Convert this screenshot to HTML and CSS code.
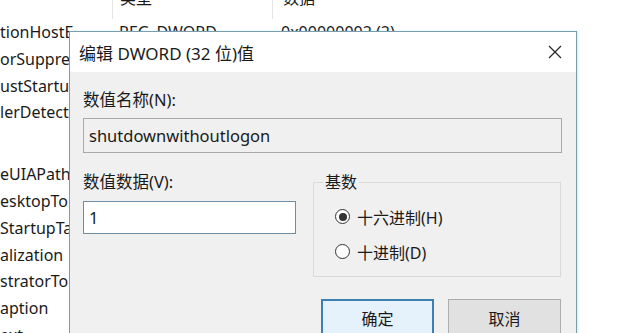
FILE: index.html
```html
<!DOCTYPE html>
<html lang="zh-CN">
<head>
    <meta charset="UTF-8">
    <meta name="viewport" content="width=device-width, initial-scale=1.0">
    <title>编辑 DWORD (32 位)值</title>
    <link rel="stylesheet" href="styles.css">
</head>
<body>
    <div class="regedit">
        <div class="reg-head">
            <div class="col name"></div>
            <div class="col type">类型</div>
            <div class="col data">数据</div>
        </div>
        <div class="reg-row">
            <div class="col name">tionHostE</div>
            <div class="col type">REG_DWORD</div>
            <div class="col data">0x00000002 (2)</div>
        </div>
        <div class="reg-row"><div class="col name">orSuppres</div></div>
        <div class="reg-row"><div class="col name">ustStartu</div></div>
        <div class="reg-row"><div class="col name">lerDetect</div></div>
        <div class="reg-row blank"><div class="col name"></div></div>
        <div class="reg-row"><div class="col name">eUIAPath</div></div>
        <div class="reg-row"><div class="col name">esktopTo</div></div>
        <div class="reg-row"><div class="col name">StartupTa</div></div>
        <div class="reg-row"><div class="col name">alization</div></div>
        <div class="reg-row"><div class="col name">stratorTo</div></div>
        <div class="reg-row"><div class="col name">aption</div></div>
        <div class="reg-row"><div class="col name">ext</div></div>
    </div>

    <div class="dialog">
        <div class="dialog-title">
            <span>编辑 DWORD (32 位)值</span>
            <svg class="close" width="14" height="14" viewBox="0 0 14 14">
                <path d="M1 1 L13 13 M13 1 L1 13" stroke="#2b2b2b" stroke-width="1.3" fill="none"/>
            </svg>
        </div>
        <div class="dialog-body">
            <label class="field-label">数值名称(N):</label>
            <input class="field name-field" type="text" value="shutdownwithoutlogon" readonly>

            <div class="lower">
                <div class="value-col">
                    <label class="field-label">数值数据(V):</label>
                    <input class="field value-field" type="text" value="1">
                </div>
                <fieldset class="base-group">
                    <legend>基数</legend>
                    <div class="radio-row">
                        <span class="radio checked"></span>
                        <span>十六进制(H)</span>
                    </div>
                    <div class="radio-row">
                        <span class="radio"></span>
                        <span>十进制(D)</span>
                    </div>
                </fieldset>
            </div>

            <div class="buttons">
                <button class="btn primary">确定</button>
                <button class="btn">取消</button>
            </div>
        </div>
    </div>
</body>
</html>
```

FILE: styles.css
```css
body {
    margin: 0;
    width: 620px;
    height: 333px;
    overflow: hidden;
    background-color: #fff;
    font-family: "Noto Sans", "Noto Sans CJK SC", sans-serif;
    color: #1a1a1a;
}

/* registry editor list behind the dialog */
.regedit {
    font-size: 16px;
}

.reg-head,
.reg-row {
    display: flex;
}

.reg-head {
    height: 19px;
    line-height: 16px;
    overflow: hidden;
}

.reg-head .col {
    margin-top: -10px;
    height: 30px;
}

.reg-head .type,
.reg-head .data {
    border-left: 1px solid #e4e4e4;
}

.reg-row {
    height: 26.8px;
    line-height: 26.8px;
}

.reg-row.blank {
    height: 35px;
}

.col {
    white-space: nowrap;
    overflow: hidden;
}

.col.name {
    width: 112px;
    padding-left: 0;
}

.col.type {
    width: 152px;
    padding-left: 7px;
}

.col.data {
    padding-left: 10px;
}

/* dialog window */
.dialog {
    position: absolute;
    left: 69px;
    top: 31px;
    width: 506px;
    height: 330px;
    border: 1px solid #7b9db0;
    background-color: #f0f0f0;
    box-shadow: 1px 0 2px rgba(120, 190, 210, 0.35);
}

.dialog-title {
    height: 40px;
    background-color: #fff;
    display: flex;
    align-items: center;
    justify-content: space-between;
    padding: 0 14px 0 9px;
    font-size: 17px;
    color: #1a1a1a;
}

.dialog-body {
    padding: 17px 14px 0 13px;
    font-size: 16.5px;
}

.field-label {
    display: block;
    line-height: 22px;
}

.field {
    display: block;
    box-sizing: border-box;
    font-family: "Noto Sans", "Noto Sans CJK SC", sans-serif;
    font-size: 16.5px;
    color: #1a1a1a;
    padding: 0 5px;
    outline: none;
}

.name-field {
    width: 479px;
    height: 35px;
    margin-top: 7px;
    border: 1px solid #a9a9a9;
    background-color: #f0f0f0;
}

.lower {
    display: grid;
    grid-template-columns: 213px 248px;
    column-gap: 17px;
    margin-top: 18px;
}

.value-field {
    width: 213px;
    height: 33px;
    margin-top: 8px;
    border: 1px solid #6d8ea3;
    background-color: #fff;
}

.base-group {
    margin: 0;
    padding: 6px 0 0 21px;
    height: 106px;
    box-sizing: border-box;
    border: 1px solid #dadada;
}

.base-group legend {
    padding: 0 2px;
    margin-left: -12px;
    line-height: 22px;
    font-size: 16px;
}

.radio-row {
    display: flex;
    align-items: center;
    gap: 7px;
    height: 35px;
    font-size: 16px;
}

.radio {
    width: 13px;
    height: 13px;
    border: 1px solid #333;
    border-radius: 50%;
    background-color: #fff;
    display: flex;
    align-items: center;
    justify-content: center;
}

.radio.checked::after {
    content: "";
    width: 8px;
    height: 8px;
    border-radius: 50%;
    background-color: #333;
}

.buttons {
    display: flex;
    justify-content: flex-end;
    gap: 14px;
    margin-top: 22px;
    padding-right: 1px;
}

.btn {
    width: 113px;
    height: 38px;
    font-family: "Noto Sans CJK SC", sans-serif;
    font-size: 16px;
    color: #1a1a1a;
    background-color: #e1e1e1;
    border: 1px solid #adadad;
    padding: 0;
}

.btn.primary {
    background-color: #e5f1fb;
    border: 2px solid #3d7fb0;
}
```
